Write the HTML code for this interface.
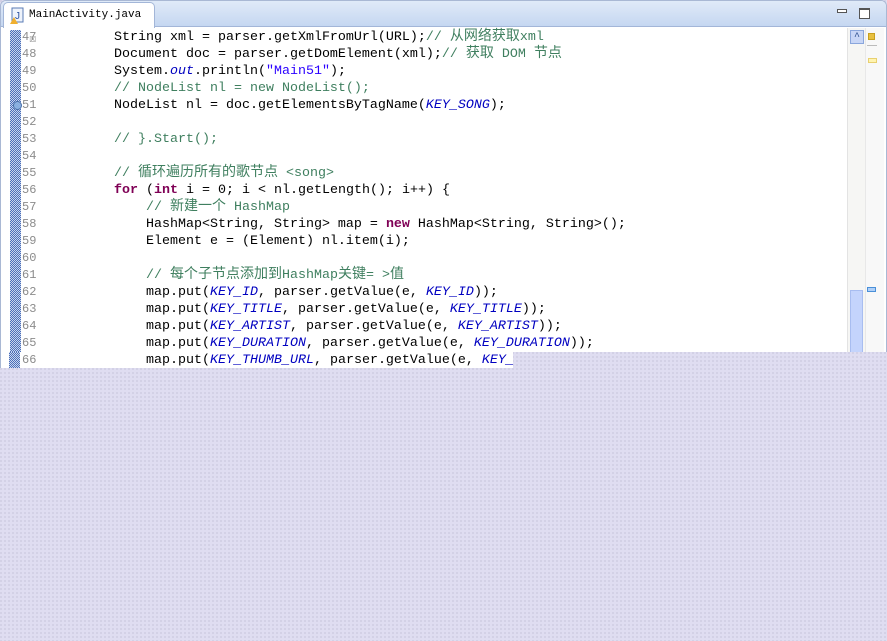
<!DOCTYPE html>
<html><head><meta charset="utf-8"><style>
*{margin:0;padding:0;box-sizing:border-box}
body{width:887px;height:641px;overflow:hidden;position:relative;
background-color:#dfddf1;
background-image:radial-gradient(circle at 1px 1px,#cbc9de 0.7px,transparent 1px);
background-size:4px 4px;font-family:"Liberation Mono",monospace}
#frame{position:absolute;left:0;top:0;width:887px;height:352px;background:#fff;border:1px solid #a9b8d4;border-bottom:none;border-radius:6px 6px 0 0;overflow:hidden}
#bar{position:absolute;left:0;top:0;width:100%;height:26px;background:linear-gradient(#e0eaf8,#c5d7f1);border-bottom:1px solid #a3b6d8}
#tab{position:absolute;left:2px;top:1px;width:152px;height:26px;background:#fff;border:1px solid #a3b6d8;border-bottom:none;border-radius:5px 5px 0 0;font-size:11px;line-height:24px;padding-left:25px;color:#000}
#code{position:absolute;left:0;top:29px;width:846px;height:340px}
.ln{position:absolute;left:22px;width:30px;font-size:12px;color:#8c8c8c;height:17px;line-height:17px}
.cl{position:absolute;left:50px;white-space:pre;font-size:13.33px;height:17px;line-height:17px;color:#000}
.k{color:#7f0055;font-weight:bold}.c{color:#3f7f5f}.s{color:#2a00ff}.f{color:#0000c0;font-style:italic}
.j{font-family:"Liberation Mono","Noto Sans CJK SC",monospace;font-size:14px}
</style></head><body>
<div id="frame">
<div id="bar">
<div id="tab"><svg style="position:absolute;left:6px;top:4px" width="16" height="18"><rect x="2" y="1" width="11" height="14" fill="#eef3fb" stroke="#5a7bb5"/><text x="5" y="12" font-size="10" fill="#2a50a0" font-family="Liberation Sans">J</text><path d="M0 17 L4 10 L8 17Z" fill="#f0b030"/></svg>MainActivity.java <span style="color:#888;font-size:12px">☒</span></div>
<div style="position:absolute;left:836px;top:8px;width:10px;height:4px;border:1px solid #555;background:#fff"></div>
<div style="position:absolute;left:858px;top:7px;width:11px;height:11px;border:1px solid #555;border-top-width:2px;background:#fff"></div>
</div>
<div style="position:absolute;left:9px;top:29px;width:11px;height:323px;background-image:repeating-conic-gradient(#4b6fb8 0 25%,#c8d4ee 0 50%);background-size:2px 2px"></div>
<div style="position:absolute;left:846px;top:27px;width:18px;height:325px;background:#f6f6f4;border-left:1px solid #e3e3e3"></div>
<div style="position:absolute;left:849px;top:29px;width:14px;height:14px;background:#c8d6f6;border:1px solid #8aa6dc;color:#2a4c8c;font-size:10px;text-align:center;line-height:14px">^</div>
<div style="position:absolute;left:849px;top:289px;width:13px;height:63px;background:#c4d4fc;border:1px solid #a8bdf0"></div>
<div style="position:absolute;left:864px;top:27px;width:19px;height:325px;background:#f8f8f8;border-left:1px solid #e8e8e8"></div>
<div style="position:absolute;left:867px;top:32px;width:7px;height:7px;background:#e8c040;border:1px solid #c8a020"></div>
<div style="position:absolute;left:866px;top:44px;width:10px;height:1px;background:#bbb"></div>
<div style="position:absolute;left:867px;top:57px;width:9px;height:5px;background:#fff4b0;border:1px solid #e8d070"></div>
<div style="position:absolute;left:866px;top:286px;width:9px;height:5px;background:#b0d0f8;border:1px solid #4a90d8"></div>
<div style="position:absolute;left:12px;top:100px;width:9px;height:9px;border-radius:50%;background:#8ab0e0;border:1px solid #4a70a8"></div>
</div>
<div style="position:absolute;left:0;top:352px;width:513px;height:16px;background:#fff;border-left:1px solid #a9b8d4"></div>
<div style="position:absolute;left:9px;top:352px;width:11px;height:16px;background-image:repeating-conic-gradient(#4b6fb8 0 25%,#c8d4ee 0 50%);background-size:2px 2px"></div>
<div id="code">
<div class="ln" style="top:0">47</div><div class="cl" style="top:0">        String xml = parser.getXmlFromUrl(URL);<span class="c">// <span class="j">从网络获取</span>xml</span></div>
<div class="ln" style="top:17px">48</div><div class="cl" style="top:17px">        Document doc = parser.getDomElement(xml);<span class="c">// <span class="j">获取</span> DOM <span class="j">节点</span></span></div>
<div class="ln" style="top:34px">49</div><div class="cl" style="top:34px">        System.<span class="f">out</span>.println(<span class="s">"Main51"</span>);</div>
<div class="ln" style="top:51px">50</div><div class="cl" style="top:51px"><span class="c">        // NodeList nl = new NodeList();</span></div>
<div class="ln" style="top:68px">51</div><div class="cl" style="top:68px">        NodeList nl = doc.getElementsByTagName(<span class="f">KEY_SONG</span>);</div>
<div class="ln" style="top:85px">52</div>
<div class="ln" style="top:102px">53</div><div class="cl" style="top:102px"><span class="c">        // }.Start();</span></div>
<div class="ln" style="top:119px">54</div>
<div class="ln" style="top:136px">55</div><div class="cl" style="top:136px"><span class="c">        // <span class="j">循环遍历所有的歌节点</span> &lt;song&gt;</span></div>
<div class="ln" style="top:153px">56</div><div class="cl" style="top:153px">        <span class="k">for</span> (<span class="k">int</span> i = 0; i &lt; nl.getLength(); i++) {</div>
<div class="ln" style="top:170px">57</div><div class="cl" style="top:170px"><span class="c">            // <span class="j">新建一个</span> HashMap</span></div>
<div class="ln" style="top:187px">58</div><div class="cl" style="top:187px">            HashMap&lt;String, String&gt; map = <span class="k">new</span> HashMap&lt;String, String&gt;();</div>
<div class="ln" style="top:204px">59</div><div class="cl" style="top:204px">            Element e = (Element) nl.item(i);</div>
<div class="ln" style="top:221px">60</div>
<div class="ln" style="top:238px">61</div><div class="cl" style="top:238px"><span class="c">            // <span class="j">每个子节点添加到</span>HashMap<span class="j">关键</span>= &gt;<span class="j">值</span></span></div>
<div class="ln" style="top:255px">62</div><div class="cl" style="top:255px">            map.put(<span class="f">KEY_ID</span>, parser.getValue(e, <span class="f">KEY_ID</span>));</div>
<div class="ln" style="top:272px">63</div><div class="cl" style="top:272px">            map.put(<span class="f">KEY_TITLE</span>, parser.getValue(e, <span class="f">KEY_TITLE</span>));</div>
<div class="ln" style="top:289px">64</div><div class="cl" style="top:289px">            map.put(<span class="f">KEY_ARTIST</span>, parser.getValue(e, <span class="f">KEY_ARTIST</span>));</div>
<div class="ln" style="top:306px">65</div><div class="cl" style="top:306px">            map.put(<span class="f">KEY_DURATION</span>, parser.getValue(e, <span class="f">KEY_DURATION</span>));</div>
<div class="ln" style="top:323px">66</div><div class="cl" style="top:323px">            map.put(<span class="f">KEY_THUMB_URL</span>, parser.getValue(e, <span class="f">KEY_</span></div>
</div>
</body></html>
